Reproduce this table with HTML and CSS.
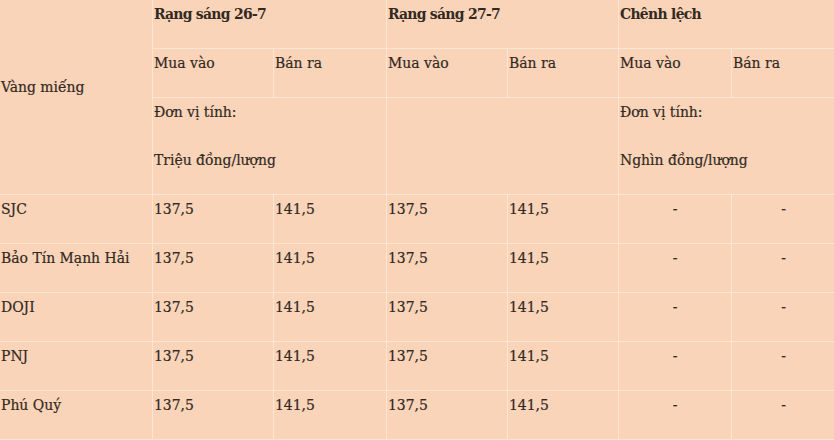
FILE: index.html
```html
<!DOCTYPE html>
<html lang="vi">
<head>
<meta charset="utf-8">
<title>Giá vàng miếng</title>
<link rel="stylesheet" href="styles.css">
</head>
<body>
<table class="gold">
  <colgroup>
    <col class="c1"><col class="c2"><col class="c3"><col class="c4"><col class="c5"><col class="c6"><col class="c7">
  </colgroup>
  <tbody>
    <tr>
      <td rowspan="3"><p>Vàng miếng</p></td>
      <td colspan="2"><p class="b">Rạng sáng 26-7</p></td>
      <td colspan="2"><p class="b">Rạng sáng 27-7</p></td>
      <td colspan="2"><p class="b">Chênh lệch</p></td>
    </tr>
    <tr>
      <td><p>Mua vào</p></td>
      <td><p>Bán ra</p></td>
      <td><p>Mua vào</p></td>
      <td><p>Bán ra</p></td>
      <td><p>Mua vào</p></td>
      <td><p>Bán ra</p></td>
    </tr>
    <tr>
      <td colspan="2"><p>Đơn vị tính:</p><p>Triệu đồng/lượng</p></td>
      <td colspan="2"></td>
      <td colspan="2"><p>Đơn vị tính:</p><p>Nghìn đồng/lượng</p></td>
    </tr>
    <tr>
      <td><p>SJC</p></td>
      <td><p>137,5</p></td><td><p>141,5</p></td>
      <td><p>137,5</p></td><td><p>141,5</p></td>
      <td class="ctr"><p>-</p></td><td class="ctr"><p>-</p></td>
    </tr>
    <tr>
      <td><p>Bảo Tín Mạnh Hải</p></td>
      <td><p>137,5</p></td><td><p>141,5</p></td>
      <td><p>137,5</p></td><td><p>141,5</p></td>
      <td class="ctr"><p>-</p></td><td class="ctr"><p>-</p></td>
    </tr>
    <tr>
      <td><p>DOJI</p></td>
      <td><p>137,5</p></td><td><p>141,5</p></td>
      <td><p>137,5</p></td><td><p>141,5</p></td>
      <td class="ctr"><p>-</p></td><td class="ctr"><p>-</p></td>
    </tr>
    <tr>
      <td><p>PNJ</p></td>
      <td><p>137,5</p></td><td><p>141,5</p></td>
      <td><p>137,5</p></td><td><p>141,5</p></td>
      <td class="ctr"><p>-</p></td><td class="ctr"><p>-</p></td>
    </tr>
    <tr>
      <td><p>Phú Quý</p></td>
      <td><p>137,5</p></td><td><p>141,5</p></td>
      <td><p>137,5</p></td><td><p>141,5</p></td>
      <td class="ctr"><p>-</p></td><td class="ctr"><p>-</p></td>
    </tr>
  </tbody>
</table>
</body>
</html>
```
FILE: styles.css
```css
html, body {
  margin: 0;
  padding: 0;
  background: #f9d4b8;
  overflow: hidden;
}
.gold {
  border-collapse: collapse;
  table-layout: fixed;
  width: 836px;
  margin: -1px 0 0 -1px;
  font-family: "DejaVu Serif Condensed", "DejaVu Serif", "Liberation Serif", serif;
  font-size: 15.5px;
  color: #33291f;
  -webkit-text-stroke: 0.2px #33291f;
}
.c1 { width: 153px; }
.c2 { width: 121px; }
.c3 { width: 113px; }
.c4 { width: 121px; }
.c5 { width: 111px; }
.c6 { width: 113px; }
.c7 { width: 104px; }
.gold td {
  border: 1px solid #fce5d4;
  padding: 0 1px;
  vertical-align: middle;
  text-align: left;
}
.gold p {
  margin: 0 0 19.5px;
  line-height: 28.5px;
}
.gold .b {
  font-weight: bold;
  letter-spacing: -0.7px;
  -webkit-text-stroke: 0;
}
.gold .ctr { text-align: center; }
```
